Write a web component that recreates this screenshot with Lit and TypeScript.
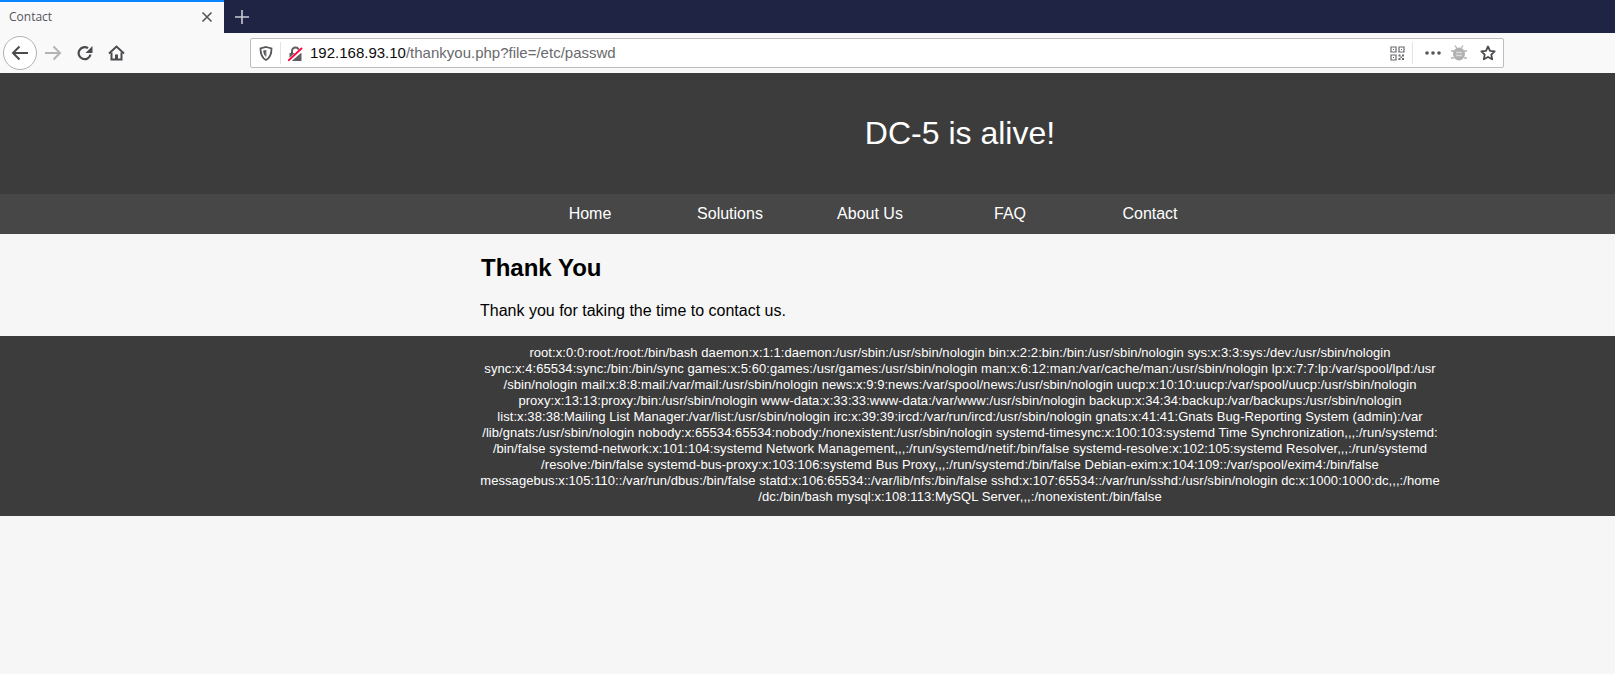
import { LitElement, css, html } from 'lit';
import { customElement } from 'lit/decorators.js';

const NAV = ['Home', 'Solutions', 'About Us', 'FAQ', 'Contact'];

const PASSWD = [
  'root:x:0:0:root:/root:/bin/bash daemon:x:1:1:daemon:/usr/sbin:/usr/sbin/nologin bin:x:2:2:bin:/bin:/usr/sbin/nologin sys:x:3:3:sys:/dev:/usr/sbin/nologin',
  'sync:x:4:65534:sync:/bin:/bin/sync games:x:5:60:games:/usr/games:/usr/sbin/nologin man:x:6:12:man:/var/cache/man:/usr/sbin/nologin lp:x:7:7:lp:/var/spool/lpd:/usr',
  '/sbin/nologin mail:x:8:8:mail:/var/mail:/usr/sbin/nologin news:x:9:9:news:/var/spool/news:/usr/sbin/nologin uucp:x:10:10:uucp:/var/spool/uucp:/usr/sbin/nologin',
  'proxy:x:13:13:proxy:/bin:/usr/sbin/nologin www-data:x:33:33:www-data:/var/www:/usr/sbin/nologin backup:x:34:34:backup:/var/backups:/usr/sbin/nologin',
  'list:x:38:38:Mailing List Manager:/var/list:/usr/sbin/nologin irc:x:39:39:ircd:/var/run/ircd:/usr/sbin/nologin gnats:x:41:41:Gnats Bug-Reporting System (admin):/var',
  '/lib/gnats:/usr/sbin/nologin nobody:x:65534:65534:nobody:/nonexistent:/usr/sbin/nologin systemd-timesync:x:100:103:systemd Time Synchronization,,,:/run/systemd:',
  '/bin/false systemd-network:x:101:104:systemd Network Management,,,:/run/systemd/netif:/bin/false systemd-resolve:x:102:105:systemd Resolver,,,:/run/systemd',
  '/resolve:/bin/false systemd-bus-proxy:x:103:106:systemd Bus Proxy,,,:/run/systemd:/bin/false Debian-exim:x:104:109::/var/spool/exim4:/bin/false',
  'messagebus:x:105:110::/var/run/dbus:/bin/false statd:x:106:65534::/var/lib/nfs:/bin/false sshd:x:107:65534::/var/run/sshd:/usr/sbin/nologin dc:x:1000:1000:dc,,,:/home',
  '/dc:/bin/bash mysql:x:108:113:MySQL Server,,,:/nonexistent:/bin/false',
];

@customElement('browser-chrome')
export class BrowserChrome extends LitElement {
  static styles = css`
    :host {
      display: block;
      font-family: 'Open Sans', 'Liberation Sans', sans-serif;
    }
    .tabs {
      display: flex;
      height: 33px;
      background: #1f2445;
    }
    .tab {
      box-sizing: border-box;
      width: 224px;
      height: 33px;
      padding: 0 11px 2px 9px;
      display: flex;
      align-items: center;
      justify-content: space-between;
      background: #f9f9fa;
      border-top: 2px solid #0a84ff;
      font-size: 12px;
      color: #55555a;
    }
    .new-tab {
      display: flex;
      align-items: center;
      margin-left: 11px;
    }
    .toolbar {
      box-sizing: border-box;
      height: 40px;
      padding-left: 3px;
      display: flex;
      align-items: center;
      background: #f9f9fa;
    }
    .back {
      box-sizing: border-box;
      width: 34px;
      height: 34px;
      border: 1px solid #b1b1b3;
      border-radius: 50%;
      background: #fff;
      display: flex;
      align-items: center;
      justify-content: center;
    }
    .fwd {
      display: flex;
      margin-left: 8px;
    }
    .reload {
      display: flex;
      margin-left: 15px;
    }
    .home {
      display: flex;
      margin-left: 15px;
    }
    .urlbar {
      box-sizing: border-box;
      width: 1254px;
      height: 30px;
      margin-left: 125px;
      padding: 0 7px 0 8px;
      display: flex;
      align-items: center;
      background: #fff;
      border: 1px solid #bdbdbf;
      border-radius: 2px;
      font-family: 'Liberation Sans', Arial, sans-serif;
    }
    .divider {
      width: 1px;
      height: 22px;
      background: #e3e3e5;
    }
    .div-left {
      margin: 0 7px;
    }
    .div-right {
      margin: 0 12px 0 7px;
    }
    .url {
      flex: 1;
      margin-left: 7px;
      padding-bottom: 2px;
      font-size: 15px;
      color: #6a6a6e;
      white-space: nowrap;
    }
    .host {
      color: #0c0c0d;
    }
    .actions {
      display: flex;
      align-items: center;
    }
    .bug {
      margin-left: 10px;
    }
    .star {
      margin-left: 13px;
    }
  `;

  render() {
    return html`
      <div class="tabs">
        <div class="tab">
          <span>Contact</span>
          <svg width="12" height="12" viewBox="0 0 12 12" fill="none" stroke="#55555a" stroke-width="1.6"><path d="M1.5 1.5l9 9M10.5 1.5l-9 9"/></svg>
        </div>
        <div class="new-tab">
          <svg width="14" height="14" viewBox="0 0 14 14" fill="none" stroke="#c9cad3" stroke-width="1.6"><path d="M7 0v14M0 7h14"/></svg>
        </div>
      </div>
      <div class="toolbar">
        <div class="back">
          <svg width="18" height="16" viewBox="0 0 18 16" fill="none" stroke="#4a4a4f" stroke-width="2"><path d="M17 8H2M8.500 1.500L2 8l6.500 6.500"/></svg>
        </div>
        <span class="fwd">
          <svg width="17" height="16" viewBox="0 0 17 16" fill="none" stroke="#b4b4b6" stroke-width="2"><path d="M0 8h15M8.500 1.500L15 8l-6.500 6.500"/></svg>
        </span>
        <span class="reload">
          <svg width="16" height="16" viewBox="0 0 16 16"><path d="M13.500 9.500A6 6 0 1 1 11 3.200" fill="none" stroke="#4a4a4f" stroke-width="2.200"/><path d="M15.500 1v7H8.500z" fill="#4a4a4f"/></svg>
        </span>
        <span class="home">
          <svg width="17" height="16" viewBox="0 0 17 16"><path d="M1 8.500L8.500 1.500 16 8.500" fill="none" stroke="#4a4a4f" stroke-width="1.900"/><path d="M3.500 7.500V14.500h10V7.500" fill="none" stroke="#4a4a4f" stroke-width="2"/><path d="M7 9.500h3V15H7z" fill="#4a4a4f"/></svg>
        </span>
        <div class="urlbar">
          <svg width="14" height="15" viewBox="0 0 14 15"><path d="M7 1l5.500 1.500c0 6-1.500 9.500-5.500 11.500C3 12 1.500 8.500 1.500 2.500z" fill="#fff" stroke="#55555a" stroke-width="1.800"/><path d="M7 4v6.500C5 9.500 4.300 7 4.200 4.500z" fill="#55555a"/><path d="M7 4v6.500" stroke="#8f8f93" stroke-width="1"/></svg>
          <span class="divider div-left"></span>
          <svg width="15" height="15" viewBox="0 0 15 15"><path fill-rule="evenodd" d="M1.500 7h1.500V5a4.500 4.500 0 0 1 9 0v2h1.500v8h-12zM5 7h5V5a2.500 2.500 0 0 0-5 0z" fill="#5f5f63"/><path d="M-1 16.500L15 2.500" stroke="#fff" stroke-width="4"/><path d="M0 15L14 2" stroke="#ff0039" stroke-width="1.800"/></svg>
          <div class="url"><span class="host">192.168.93.10</span>/thankyou.php?file=/etc/passwd</div>
          <div class="actions">
            <svg width="15" height="15" viewBox="0 0 15 15" fill="none" stroke="#6a6a6e" stroke-width="1.200"><path d="M1 1h5v5H1zM9 1h5v5H9zM1 9h5v5H1z"/><path d="M3 3h1v1H3zM11 3h1v1h-1zM3 11h1v1H3zM8.500 8.500h2v2h-2zM12 8.500h2v2h-2zM8.500 12h2v2h-2zM12 12h2v2h-2zM10.500 10.500h1.500v1.500h-1.500z" fill="#6a6a6e" stroke="none"/></svg>
            <span class="divider div-right"></span>
            <svg width="16" height="4" viewBox="0 0 16 4" fill="#55555a"><circle cx="2" cy="2" r="1.800"/><circle cx="8" cy="2" r="1.800"/><circle cx="14" cy="2" r="1.800"/></svg>
            <svg class="bug" width="16" height="16" viewBox="0 0 16 16" fill="#b1b1b3"><ellipse cx="8" cy="9" rx="6" ry="6.500"/><path d="M4 .5l2 3M12 .5l-2 3M0 6h3M16 6h-3M0 13h3M16 13h-3" stroke="#b1b1b3" stroke-width="1.300"/><path d="M5 7.500h6M5 10.500h6" stroke="#d8d8d8" stroke-width="1.300"/></svg>
            <svg class="star" width="16" height="16" viewBox="0 0 16 16" fill="none" stroke="#4a4a4f" stroke-width="1.800" stroke-linejoin="round"><path d="M8 1.500l2 4.300 4.700.6-3.400 3.200.9 4.700L8 12l-4.200 2.300.9-4.700L1.300 6.400 6 5.800z"/></svg>
          </div>
        </div>
      </div>
    `;
  }
}

@customElement('app-root')
export class AppRoot extends LitElement {
  static styles = css`
    :host {
      display: block;
      min-height: 674px;
      background: #f6f6f6;
      font-family: 'Liberation Sans', Arial, sans-serif;
    }
    .wrap {
      width: 960px;
      margin-left: 480px;
    }
    .masthead {
      height: 121px;
      background: #3c3c3c;
      color: #fff;
    }
    .masthead h1 {
      margin: 0;
      padding-top: 42px;
      font-size: 32px;
      line-height: 37px;
      font-weight: 400;
      text-align: center;
    }
    .menu {
      height: 40px;
      background: #474747;
    }
    .menu ul {
      box-sizing: border-box;
      display: flex;
      padding: 0 0 0 40px;
      margin-top: 0;
      margin-bottom: 0;
      list-style: none;
    }
    .menu li {
      width: 140px;
      line-height: 40px;
      font-size: 16px;
      text-align: center;
      color: #fff;
    }
    .body {
      height: 102px;
    }
    .body h2 {
      margin: 0;
      padding: 20px 0 0 1px;
      font-size: 24px;
      line-height: 28px;
      font-weight: 700;
      color: #000;
    }
    .body p {
      margin: 0;
      padding-top: 20px;
      font-size: 16px;
      line-height: 18px;
      color: #000;
    }
    .foot {
      box-sizing: border-box;
      height: 180px;
      padding-top: 9px;
      background: #3c3c3c;
      color: #fff;
      font-size: 13px;
      line-height: 16px;
      letter-spacing: 0.065px;
      text-align: center;
    }
    .foot div div {
      white-space: nowrap;
    }
  `;

  render() {
    return html`
      <browser-chrome></browser-chrome>
      <header class="masthead">
        <div class="wrap"><h1>DC-5 is alive!</h1></div>
      </header>
      <nav class="menu">
        <ul class="wrap">${NAV.map((n) => html`<li>${n}</li>`)}</ul>
      </nav>
      <main class="body wrap">
        <h2>Thank You</h2>
        <p>Thank you for taking the time to contact us.</p>
      </main>
      <footer class="foot">
        <div class="wrap">${PASSWD.map((l) => html`<div>${l}</div>`)}</div>
      </footer>
    `;
  }
}
